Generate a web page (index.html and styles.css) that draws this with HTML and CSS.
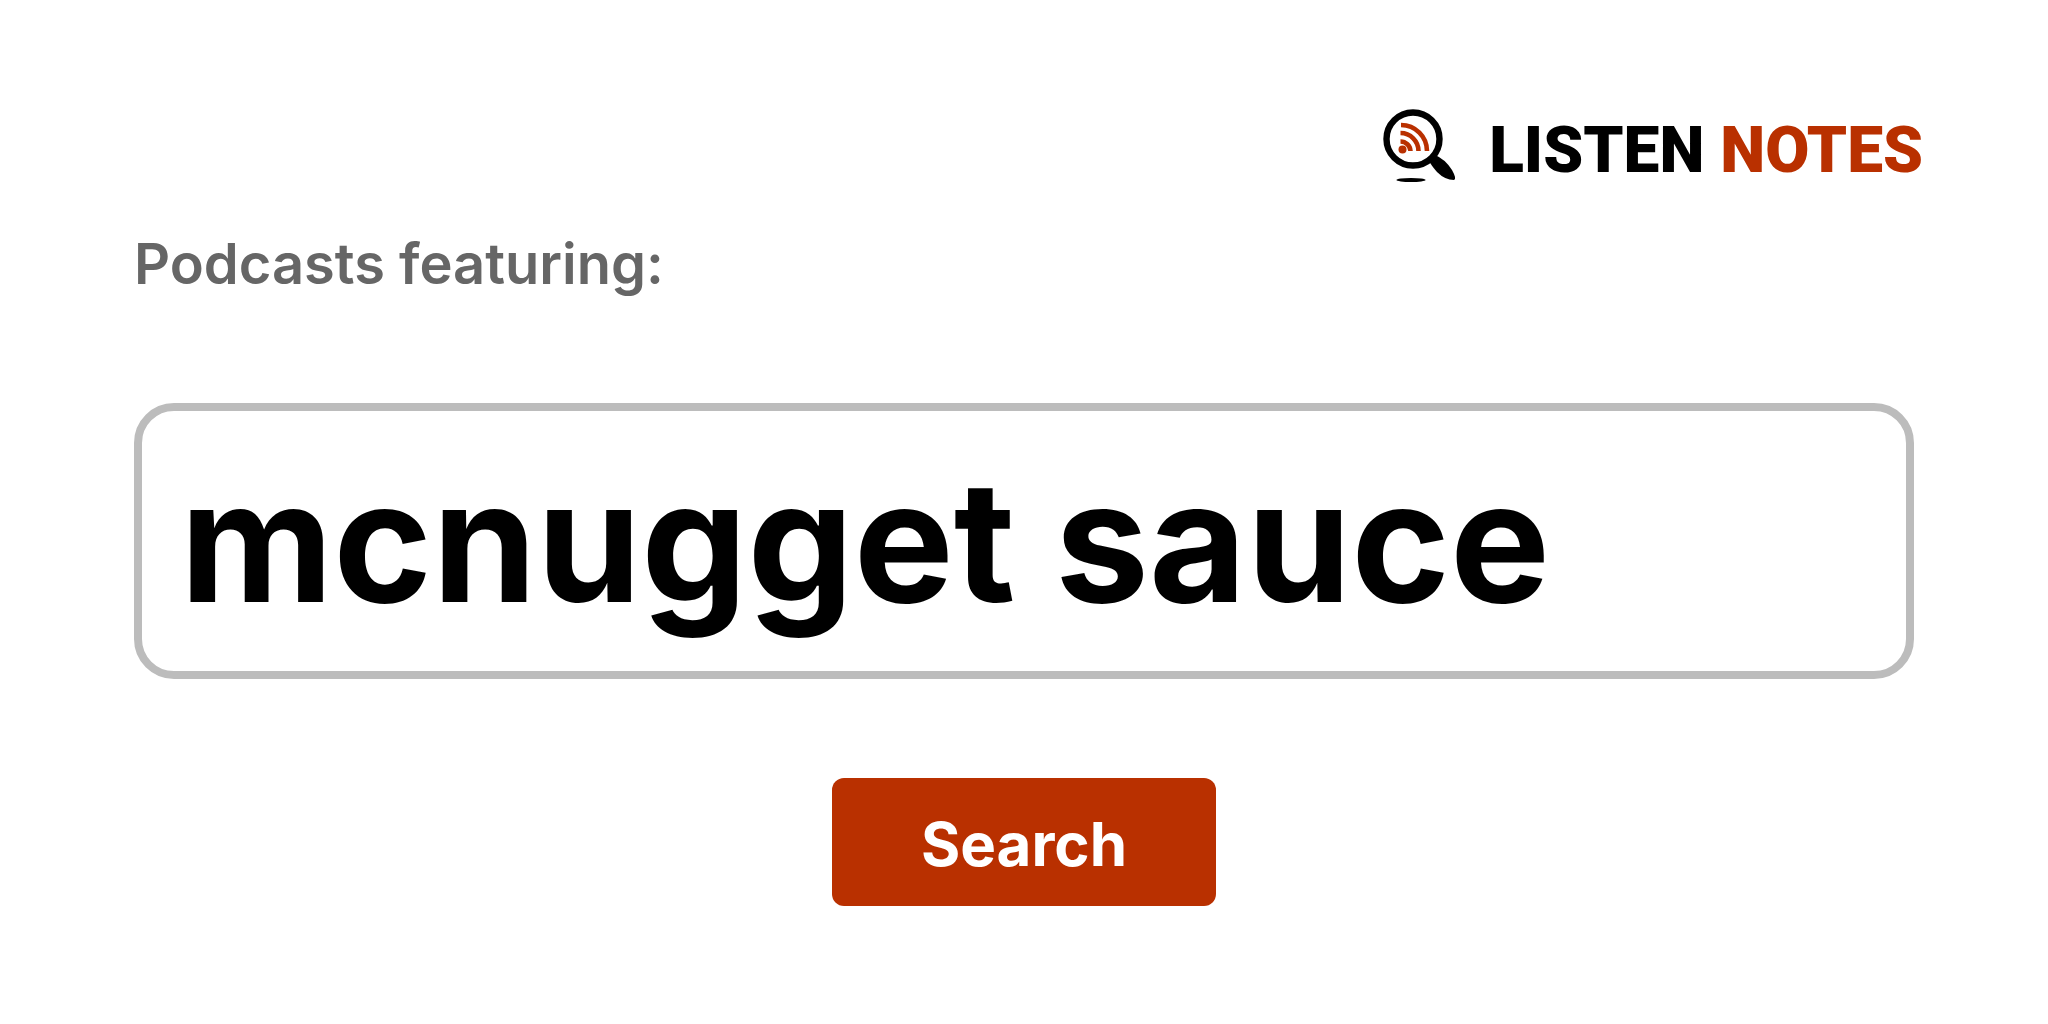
FILE: index.html
```html
<!DOCTYPE html>
<html lang="en">
<head>
<meta charset="utf-8">
<meta name="viewport" content="width=device-width, initial-scale=1">
<title>Listen Notes</title>
<link rel="stylesheet" href="styles.css">
</head>
<body>
<header class="header">
  <a class="brand" href="#">
    <svg class="brand-icon" viewBox="0 0 80 80" aria-hidden="true">
      <circle cx="34" cy="34" r="26.5" fill="#fff" stroke="#000" stroke-width="6.4"/>
      <path d="M50 56L56 50Q66 54 73 65Q78 74 75 75Q66 75 58 67Q52 60 50 56Z"/>
      <ellipse cx="32" cy="75" rx="14.500" ry="2"/>
      <g class="waves">
        <path d="M22 20A26 26 0 0 1 48 46"/>
        <path d="M21.500 28A18 18 0 0 1 39.500 46"/>
        <path d="M21.500 36.500A10 10 0 0 1 31.500 46"/>
      </g>
      <circle class="dot" cx="23.500" cy="44.500" r="4"/>
    </svg>
    <span class="brand-name">LISTEN <span class="brand-accent">NOTES</span></span>
  </a>
</header>
<main>
  <form class="search">
    <label class="search-label" for="query">Podcasts featuring:</label>
    <input class="search-input" id="query" type="text" value="mcnugget sauce">
    <button class="search-button" type="submit">Search</button>
  </form>
</main>
</body>
</html>
```
FILE: styles.css
```css
* {
  box-sizing: border-box;
}

body {
  margin: 0;
  padding: 105px 134px 0;
  background: #fff;
  color: #000;
  font-family: Inter, "Liberation Sans", sans-serif;
}

.header {
  display: flex;
  justify-content: flex-end;
  margin-right: -9px;
}

.brand {
  display: flex;
  align-items: flex-start;
  gap: 30px;
  color: #000;
  text-decoration: none;
}

.brand-icon {
  width: 80px;
  height: 80px;
}

.waves {
  fill: none;
  stroke: #b93000;
  stroke-width: 4.6;
}

.dot {
  fill: #b93000;
}

.brand-name {
  font-family: Roboto, sans-serif;
  font-size: 64px;
  font-weight: 900;
  line-height: 92px;
}

.brand-accent {
  color: #b93000;
}

.search {
  display: flex;
  flex-direction: column;
}

.search-label {
  margin: 35px 0 107px;
  color: #666;
  font-size: 56px;
  font-weight: 600;
  line-height: 64px;
}

.search-input {
  width: 100%;
  height: 276px;
  padding: 0 38px;
  border: 8px solid #bcbcbc;
  border-radius: 40px;
  outline: 0;
  background: #fff;
  color: #000;
  font: 700 168px/200px Inter, "Liberation Sans", sans-serif;
}

.search-button {
  align-self: center;
  width: 384px;
  height: 128px;
  margin-top: 99px;
  padding: 4px 0 0;
  border: 0;
  border-radius: 12px;
  background: #b93000;
  color: #fff;
  font: 700 60px/72px Inter, "Liberation Sans", sans-serif;
}
```
